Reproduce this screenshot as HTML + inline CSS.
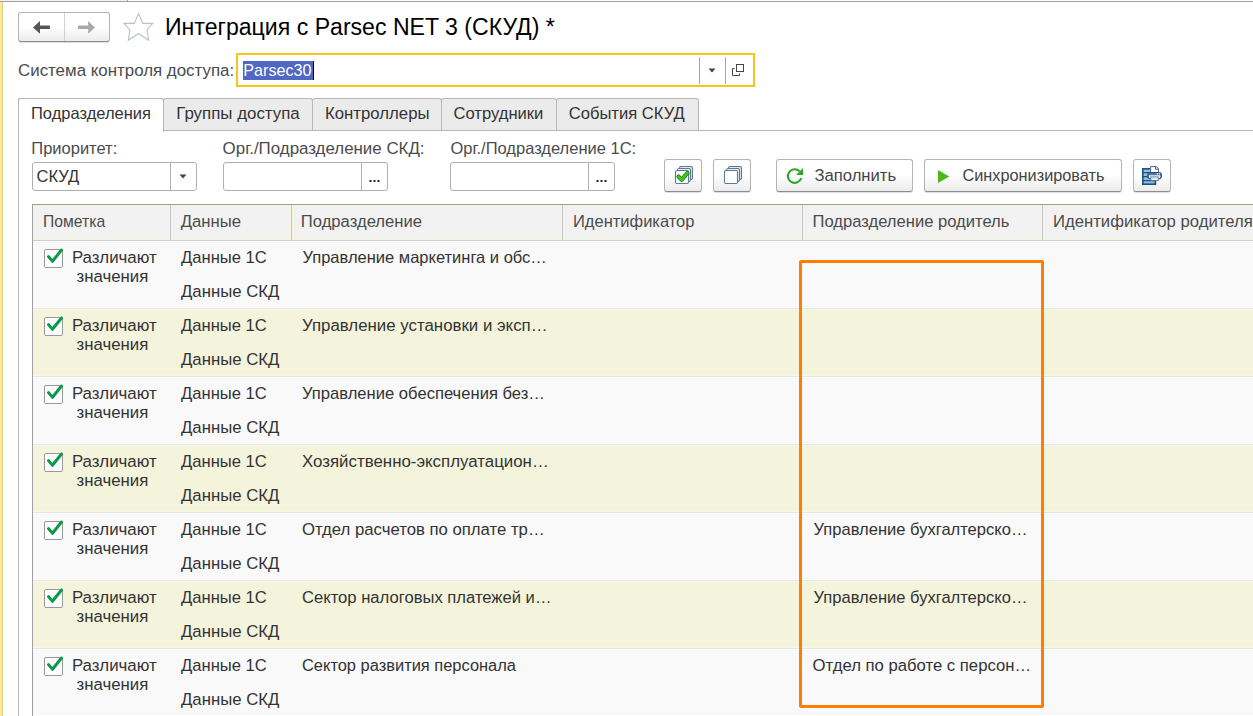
<!DOCTYPE html>
<html><head><meta charset="utf-8">
<style>
*{box-sizing:border-box;margin:0;padding:0}
html,body{width:1253px;height:716px;overflow:hidden;background:#fff}
body{position:relative;font-family:"Liberation Sans",sans-serif;color:#333;font-size:16.5px}
.a{position:absolute}
.t{position:absolute;white-space:nowrap;line-height:20px;height:20px}
.btn{position:absolute;border:1px solid #b4b4b4;border-bottom-color:#8c8c8c;border-radius:3px;background:linear-gradient(#fff 0%,#fff 48%,#ececec 100%);box-shadow:0 1px 0 rgba(0,0,0,.12)}
.fld{position:absolute;border:1px solid #b0b0b0;border-radius:3px;background:#fff}
.tab{position:absolute;top:98px;height:33px;border:1px solid #b7b7b7;border-bottom:none;border-radius:3px 3px 0 0;background:#ebebeb}
.cb{position:absolute;width:19px;height:19px;border:1px solid #9a9a9a;border-radius:2px;background:#fff}
</style></head><body>
<div class="a" style="left:0;top:0;width:127px;height:1px;background:#f2f2f2"></div>
<div class="a" style="left:127px;top:0;width:1px;height:1px;background:#a0a0a0"></div>
<div class="a" style="left:0;top:1px;width:1253px;height:1px;background:#9f9f9f"></div>
<div class="a" style="left:0;top:2px;width:2px;height:714px;background:#fde98f"></div>
<div class="a" style="left:2px;top:2px;width:1px;height:714px;background:#e0cf88"></div>
<div class="btn" style="left:18px;top:12px;width:92px;height:30px"></div>
<div class="a" style="left:64px;top:13px;width:1px;height:28px;background:#d2d2d2"></div>
<svg class="a" style="left:30px;top:18px" width="26" height="20" viewBox="0 0 26 20">
<path d="M3 9.45 L10 3.1 L10 7.5 L19.9 7.5 L19.9 11 L10 11 L10 15.8 Z" fill="#555"/></svg>
<svg class="a" style="left:75px;top:18px" width="26" height="20" viewBox="0 0 26 20">
<path d="M19.9 9.45 L13.2 3.1 L13.2 7.5 L3 7.5 L3 11 L13.2 11 L13.2 15.8 Z" fill="#a9a9a9"/></svg>
<svg class="a" style="left:120px;top:10px" width="38" height="34" viewBox="0 0 38 34">
<path d="M18.5 3.6 L22.9 13.4 L32.7 13.4 L27.1 19.9 L28.7 30.3 L18.5 23.5 L8.3 30.3 L9.9 19.9 L3.9 13.4 L14.3 13.4 Z" fill="none" stroke="#b8c2cb" stroke-width="1.1" stroke-linejoin="miter"/></svg>
<div class="t" style="left:165px;top:15px;font-size:23.1px;color:#000;line-height:24px;height:24px">Интеграция с Parsec NET 3 (СКУД) *</div>
<div class="t" style="left:18px;top:61.00px;font-size:16.9px;color:#4b4b4b;">Система контроля доступа:</div>
<div class="a" style="left:236px;top:53px;width:519px;height:34px;border:2px solid #f8c51c;background:#fff"></div>
<div class="a" style="left:243px;top:61px;width:70px;height:19px;background:#5067c4"></div>
<div class="a" style="left:313px;top:61px;width:1px;height:19px;background:#000"></div>
<div class="t" style="left:243.2px;top:60.00px;font-size:16.2px;color:#fff;">Parsec30</div>
<div class="a" style="left:699px;top:57px;width:1px;height:27px;background:#a6a6a6"></div>
<div class="a" style="left:725px;top:57px;width:1px;height:27px;background:#a6a6a6"></div>
<svg class="a" style="left:706px;top:66px" width="12" height="8"><path d="M2.5 2.5 L9.5 2.5 L6 6.5 Z" fill="#444"/></svg>
<svg class="a" style="left:728px;top:60px" width="20" height="20" viewBox="0 0 20 20">
<rect x="8.5" y="4.5" width="7" height="7" fill="none" stroke="#444" stroke-width="1"/>
<path d="M6.5 8.5 L4.5 8.5 L4.5 15.5 L11.5 15.5 L11.5 13.5" fill="none" stroke="#444" stroke-width="1"/></svg>
<div class="a" style="left:18px;top:98px;width:1px;height:618px;background:#b7b7b7"></div>
<div class="tab" style="left:18px;width:146px;height:34px;background:#fff"></div>
<div class="tab" style="left:163px;width:150px;height:32px"></div>
<div class="tab" style="left:312px;width:130px;height:32px"></div>
<div class="tab" style="left:441px;width:116px;height:32px"></div>
<div class="tab" style="left:556px;width:143px;height:32px"></div>
<div class="t" style="left:31.0px;top:103.00px;font-size:16.5px;color:#333;">Подразделения</div>
<div class="t" style="left:176.2px;top:104.00px;font-size:16.9px;color:#333;">Группы доступа</div>
<div class="t" style="left:325px;top:104.00px;font-size:16.78px;color:#333;">Контроллеры</div>
<div class="t" style="left:453.5px;top:104.00px;font-size:16.6px;color:#333;">Сотрудники</div>
<div class="t" style="left:568.7px;top:104.00px;font-size:16.6px;color:#333;">События СКУД</div>
<div class="a" style="left:18px;top:130px;width:1235px;height:1px;background:#b7b7b7"></div>
<div class="a" style="left:19px;top:130px;width:144px;height:1px;background:#fff"></div>
<div class="t" style="left:31.3px;top:138.00px;font-size:16.5px;color:#4b4b4b;">Приоритет:</div>
<div class="t" style="left:222.6px;top:139.00px;font-size:16.9px;color:#4b4b4b;">Орг./Подразделение СКД:</div>
<div class="t" style="left:450.5px;top:138.00px;font-size:16.5px;color:#4b4b4b;">Орг./Подразделение 1С:</div>
<div class="fld" style="left:32px;top:162px;width:165px;height:29px"></div>
<div class="a" style="left:170px;top:163px;width:1px;height:27px;background:#b0b0b0"></div>
<div class="t" style="left:36.5px;top:166.00px;font-size:16.5px;color:#333;">СКУД</div>
<svg class="a" style="left:177px;top:172px" width="12" height="8"><path d="M2.5 2.5 L9.5 2.5 L6 6.5 Z" fill="#444"/></svg>
<div class="fld" style="left:223px;top:162px;width:165px;height:29px"></div>
<div class="a" style="left:361px;top:163px;width:1px;height:27px;background:#b0b0b0"></div>
<div class="fld" style="left:450px;top:162px;width:165px;height:29px"></div>
<div class="a" style="left:588px;top:163px;width:1px;height:27px;background:#b0b0b0"></div>
<svg class="a" style="left:369px;top:179px" width="12" height="5"><rect x="0.5" y="1" width="2" height="2" fill="#222"/><rect x="4.5" y="1" width="2" height="2" fill="#222"/><rect x="8.5" y="1" width="2" height="2" fill="#222"/></svg>
<svg class="a" style="left:596px;top:179px" width="12" height="5"><rect x="0.5" y="1" width="2" height="2" fill="#222"/><rect x="4.5" y="1" width="2" height="2" fill="#222"/><rect x="8.5" y="1" width="2" height="2" fill="#222"/></svg>
<div class="btn" style="left:664px;top:159px;width:38px;height:33px"></div>
<div class="btn" style="left:713px;top:159px;width:38px;height:33px"></div>
<div class="btn" style="left:776px;top:159px;width:137px;height:33px"></div>
<div class="btn" style="left:924px;top:159px;width:198px;height:33px"></div>
<div class="btn" style="left:1133px;top:159px;width:38px;height:33px"></div>
<div class="t" style="left:814.4px;top:166.00px;font-size:16.66px;color:#444;">Заполнить</div>
<div class="t" style="left:962.5px;top:165.00px;font-size:16.3px;color:#444;">Синхронизировать</div>
<svg class="a" style="left:673px;top:164px" width="22" height="22" viewBox="0 0 22 22"><rect x="6.5" y="2.5" width="13" height="13" rx="1.5" fill="#e3e8ee" stroke="#5d7a94" stroke-width="1.1"/><rect x="4.5" y="4.5" width="13" height="13" rx="1.5" fill="#edf0f4" stroke="#5d7a94" stroke-width="1.1"/><rect x="2.5" y="6.5" width="13" height="13" rx="1.5" fill="#ffffff" stroke="#5d7a94" stroke-width="1.1"/><path d="M5.5 12.6 L8.6 15.8 L14.4 9.0" fill="none" stroke="#1f8a12" stroke-width="4.2" stroke-linecap="round" stroke-linejoin="round"/><path d="M5.5 12.6 L8.6 15.8 L14.4 9.0" fill="none" stroke="#43c823" stroke-width="2.4" stroke-linecap="round" stroke-linejoin="round"/></svg>
<svg class="a" style="left:722px;top:164px" width="22" height="22" viewBox="0 0 22 22"><rect x="6.5" y="2.5" width="13" height="13" rx="1.5" fill="#e3e8ee" stroke="#5d7a94" stroke-width="1.1"/><rect x="4.5" y="4.5" width="13" height="13" rx="1.5" fill="#edf0f4" stroke="#5d7a94" stroke-width="1.1"/><rect x="2.5" y="6.5" width="13" height="13" rx="1.5" fill="#ffffff" stroke="#5d7a94" stroke-width="1.1"/></svg>
<svg class="a" style="left:784px;top:164px" width="22" height="24" viewBox="784 164 22 24"><path d="M801.2 178.0 A6.8 6.8 0 1 1 799.5 171.2" fill="none" stroke="#2ea52e" stroke-width="2.1"/><path d="M803 168 L803 175 L796 175 Z" fill="#2ea52e"/></svg>
<svg class="a" style="left:930px;top:164px" width="30" height="24" viewBox="930 164 30 24"><path d="M938 170 L949.3 176.4 L938 183 Z" fill="#4cb61a"/></svg>
<svg class="a" style="left:1138px;top:162px" width="28" height="26" viewBox="1138 162 28 26">
<rect x="1142.8" y="168.8" width="12.6" height="15.4" fill="#8dbde6" stroke="#1f4f7f" stroke-width="1.6"/>
<path d="M1142.8 172.6 H1155.4 M1142.8 176.6 H1155.4 M1142.8 180.6 H1155.4" stroke="#1f4f7f" stroke-width="1.2"/>
<path d="M1150.6 166.6 H1156.6 L1158.5 168.5 V172.5 H1150.6 Z" fill="#fff" stroke="#5a6b7c" stroke-width="1"/>
<path d="M1155.6 166.8 V169.2 H1158.4" fill="none" stroke="#3a5a7a" stroke-width="1"/>
<rect x="1147.9" y="172.5" width="13.4" height="6.2" rx="1.8" fill="#4f75a0" stroke="#1f4a7a" stroke-width="1"/>
<rect x="1148.9" y="175.2" width="11.4" height="2.8" rx="1" fill="#fff"/>
<rect x="1149.5" y="175.2" width="10.2" height="0.9" fill="#c5d2de"/>
<circle cx="1157.4" cy="173.7" r="0.7" fill="#fff"/><circle cx="1159.4" cy="173.7" r="0.7" fill="#fff"/>
<rect x="1150.8" y="176.9" width="7.4" height="3.6" fill="#fff" stroke="#50708f" stroke-width="0.9"/>
<rect x="1151.4" y="178.3" width="6.2" height="0.8" fill="#bcd0e4"/>
</svg>
<div class="a" style="left:32px;top:204px;width:1221px;height:512px;background:#f9f9f9"></div>
<div class="a" style="left:33px;top:205px;width:1220px;height:35px;background:#f2f2f2"></div>
<div class="a" style="left:32px;top:204px;width:1221px;height:1px;background:#9e9e9e"></div>
<div class="a" style="left:33px;top:240px;width:1220px;height:1px;background:#cdcdcd"></div>
<div class="a" style="left:33px;top:205px;width:137px;height:35px;border:1px solid #f5f5dc"></div>
<div class="a" style="left:171px;top:205px;width:120px;height:35px;border:1px solid #f5f5dc"></div>
<div class="a" style="left:292px;top:205px;width:270px;height:35px;border:1px solid #f5f5dc"></div>
<div class="a" style="left:563px;top:205px;width:239px;height:35px;border:1px solid #f5f5dc"></div>
<div class="a" style="left:803px;top:205px;width:239px;height:35px;border:1px solid #f5f5dc"></div>
<div class="a" style="left:1043px;top:205px;width:258px;height:35px;border:1px solid #f5f5dc"></div>
<div class="a" style="left:170px;top:205px;width:1px;height:35px;background:#c8c8c8"></div>
<div class="a" style="left:291px;top:205px;width:1px;height:35px;background:#c8c8c8"></div>
<div class="a" style="left:562px;top:205px;width:1px;height:35px;background:#c8c8c8"></div>
<div class="a" style="left:802px;top:205px;width:1px;height:35px;background:#c8c8c8"></div>
<div class="a" style="left:1042px;top:205px;width:1px;height:35px;background:#c8c8c8"></div>
<div class="t" style="left:43.0px;top:212.00px;font-size:15.7px;color:#4b4b4b;">Пометка</div>
<div class="t" style="left:180.7px;top:212.00px;font-size:16.7px;color:#4b4b4b;">Данные</div>
<div class="t" style="left:300.8px;top:212.00px;font-size:16.65px;color:#4b4b4b;">Подразделение</div>
<div class="t" style="left:573.0px;top:211.00px;font-size:16.5px;color:#4b4b4b;">Идентификатор</div>
<div class="t" style="left:812.6px;top:212.00px;font-size:16.58px;color:#4b4b4b;">Подразделение родитель</div>
<div class="t" style="left:1053.0px;top:212.00px;font-size:16.7px;color:#4b4b4b;">Идентификатор родителя</div>
<div class="a" style="left:33px;top:241px;width:1220px;height:67px;background:#f9f9f9"></div>
<div class="a" style="left:33px;top:241px;width:1220px;height:1px;background:#fff"></div>
<div class="a" style="left:33px;top:242px;width:1220px;height:1px;background:#f5f5f5"></div>
<div class="a" style="left:33px;top:306px;width:1220px;height:1px;background:#f5f5f5"></div>
<div class="a" style="left:33px;top:307px;width:1220px;height:1px;background:#fff"></div>
<div class="cb" style="left:44px;top:249px"></div>
<svg class="a" style="left:44px;top:246px" width="22" height="22" viewBox="0 0 22 22"><path d="M4.5 10.6 L8.5 15.3 L17.5 4" fill="none" stroke="#0b9a45" stroke-width="3" stroke-linecap="round" stroke-linejoin="round"/></svg>
<div class="t" style="left:71.9px;top:248.00px;font-size:16.86px;">Различают</div>
<div class="t" style="left:76.6px;top:267.00px;font-size:16.8px;">значения</div>
<div class="t" style="left:181px;top:248.00px;font-size:16.6px;">Данные 1С</div>
<div class="t" style="left:181px;top:282.00px;font-size:16.75px;">Данные СКД</div>
<div class="t" style="left:302.5px;top:247.00px;font-size:16.5px;">Управление маркетинга и обс…</div>
<div class="a" style="left:33px;top:309px;width:1220px;height:67px;background:#f4f3dc"></div>
<div class="a" style="left:33px;top:308px;width:1220px;height:1px;background:#e6e6e6"></div>
<div class="a" style="left:33px;top:309px;width:1220px;height:1px;background:#f8f8e2"></div>
<div class="a" style="left:33px;top:375px;width:1220px;height:1px;background:#f8f8e2"></div>
<div class="cb" style="left:44px;top:317px"></div>
<svg class="a" style="left:44px;top:314px" width="22" height="22" viewBox="0 0 22 22"><path d="M4.5 10.6 L8.5 15.3 L17.5 4" fill="none" stroke="#0b9a45" stroke-width="3" stroke-linecap="round" stroke-linejoin="round"/></svg>
<div class="t" style="left:71.9px;top:316.00px;font-size:16.86px;">Различают</div>
<div class="t" style="left:76.6px;top:335.00px;font-size:16.8px;">значения</div>
<div class="t" style="left:181px;top:316.00px;font-size:16.6px;">Данные 1С</div>
<div class="t" style="left:181px;top:350.00px;font-size:16.75px;">Данные СКД</div>
<div class="t" style="left:302.0px;top:316.00px;font-size:16.85px;">Управление установки и эксп…</div>
<div class="a" style="left:33px;top:377px;width:1220px;height:67px;background:#f9f9f9"></div>
<div class="a" style="left:33px;top:376px;width:1220px;height:1px;background:#e6e6e6"></div>
<div class="a" style="left:33px;top:377px;width:1220px;height:1px;background:#fff"></div>
<div class="a" style="left:33px;top:378px;width:1220px;height:1px;background:#f5f5f5"></div>
<div class="a" style="left:33px;top:442px;width:1220px;height:1px;background:#f5f5f5"></div>
<div class="a" style="left:33px;top:443px;width:1220px;height:1px;background:#fff"></div>
<div class="cb" style="left:44px;top:385px"></div>
<svg class="a" style="left:44px;top:382px" width="22" height="22" viewBox="0 0 22 22"><path d="M4.5 10.6 L8.5 15.3 L17.5 4" fill="none" stroke="#0b9a45" stroke-width="3" stroke-linecap="round" stroke-linejoin="round"/></svg>
<div class="t" style="left:71.9px;top:384.00px;font-size:16.86px;">Различают</div>
<div class="t" style="left:76.6px;top:403.00px;font-size:16.8px;">значения</div>
<div class="t" style="left:181px;top:384.00px;font-size:16.6px;">Данные 1С</div>
<div class="t" style="left:181px;top:418.00px;font-size:16.75px;">Данные СКД</div>
<div class="t" style="left:302.0px;top:384.00px;font-size:16.6px;">Управление обеспечения без…</div>
<div class="a" style="left:33px;top:445px;width:1220px;height:67px;background:#f4f3dc"></div>
<div class="a" style="left:33px;top:444px;width:1220px;height:1px;background:#e6e6e6"></div>
<div class="a" style="left:33px;top:445px;width:1220px;height:1px;background:#f8f8e2"></div>
<div class="a" style="left:33px;top:511px;width:1220px;height:1px;background:#f8f8e2"></div>
<div class="cb" style="left:44px;top:453px"></div>
<svg class="a" style="left:44px;top:450px" width="22" height="22" viewBox="0 0 22 22"><path d="M4.5 10.6 L8.5 15.3 L17.5 4" fill="none" stroke="#0b9a45" stroke-width="3" stroke-linecap="round" stroke-linejoin="round"/></svg>
<div class="t" style="left:71.9px;top:452.00px;font-size:16.86px;">Различают</div>
<div class="t" style="left:76.6px;top:471.00px;font-size:16.8px;">значения</div>
<div class="t" style="left:181px;top:452.00px;font-size:16.6px;">Данные 1С</div>
<div class="t" style="left:181px;top:486.00px;font-size:16.75px;">Данные СКД</div>
<div class="t" style="left:302.0px;top:452.00px;font-size:16.86px;">Хозяйственно-эксплуатацион…</div>
<div class="a" style="left:33px;top:513px;width:1220px;height:67px;background:#f9f9f9"></div>
<div class="a" style="left:33px;top:512px;width:1220px;height:1px;background:#e6e6e6"></div>
<div class="a" style="left:33px;top:513px;width:1220px;height:1px;background:#fff"></div>
<div class="a" style="left:33px;top:514px;width:1220px;height:1px;background:#f5f5f5"></div>
<div class="a" style="left:33px;top:578px;width:1220px;height:1px;background:#f5f5f5"></div>
<div class="a" style="left:33px;top:579px;width:1220px;height:1px;background:#fff"></div>
<div class="cb" style="left:44px;top:521px"></div>
<svg class="a" style="left:44px;top:518px" width="22" height="22" viewBox="0 0 22 22"><path d="M4.5 10.6 L8.5 15.3 L17.5 4" fill="none" stroke="#0b9a45" stroke-width="3" stroke-linecap="round" stroke-linejoin="round"/></svg>
<div class="t" style="left:71.9px;top:520.00px;font-size:16.86px;">Различают</div>
<div class="t" style="left:76.6px;top:539.00px;font-size:16.8px;">значения</div>
<div class="t" style="left:181px;top:520.00px;font-size:16.6px;">Данные 1С</div>
<div class="t" style="left:181px;top:554.00px;font-size:16.75px;">Данные СКД</div>
<div class="t" style="left:302.0px;top:520.00px;font-size:16.73px;">Отдел расчетов по оплате тр…</div>
<div class="t" style="left:813.6px;top:520.00px;font-size:16.55px;">Управление бухгалтерско…</div>
<div class="a" style="left:33px;top:581px;width:1220px;height:67px;background:#f4f3dc"></div>
<div class="a" style="left:33px;top:580px;width:1220px;height:1px;background:#e6e6e6"></div>
<div class="a" style="left:33px;top:581px;width:1220px;height:1px;background:#f8f8e2"></div>
<div class="a" style="left:33px;top:647px;width:1220px;height:1px;background:#f8f8e2"></div>
<div class="cb" style="left:44px;top:589px"></div>
<svg class="a" style="left:44px;top:586px" width="22" height="22" viewBox="0 0 22 22"><path d="M4.5 10.6 L8.5 15.3 L17.5 4" fill="none" stroke="#0b9a45" stroke-width="3" stroke-linecap="round" stroke-linejoin="round"/></svg>
<div class="t" style="left:71.9px;top:588.00px;font-size:16.86px;">Различают</div>
<div class="t" style="left:76.6px;top:607.00px;font-size:16.8px;">значения</div>
<div class="t" style="left:181px;top:588.00px;font-size:16.6px;">Данные 1С</div>
<div class="t" style="left:181px;top:622.00px;font-size:16.75px;">Данные СКД</div>
<div class="t" style="left:302.0px;top:588.00px;font-size:16.62px;">Сектор налоговых платежей и…</div>
<div class="t" style="left:813.6px;top:588.00px;font-size:16.55px;">Управление бухгалтерско…</div>
<div class="a" style="left:33px;top:649px;width:1220px;height:67px;background:#f9f9f9"></div>
<div class="a" style="left:33px;top:648px;width:1220px;height:1px;background:#e6e6e6"></div>
<div class="a" style="left:33px;top:649px;width:1220px;height:1px;background:#fff"></div>
<div class="a" style="left:33px;top:650px;width:1220px;height:1px;background:#f5f5f5"></div>
<div class="a" style="left:33px;top:714px;width:1220px;height:1px;background:#f5f5f5"></div>
<div class="a" style="left:33px;top:715px;width:1220px;height:1px;background:#fff"></div>
<div class="cb" style="left:44px;top:657px"></div>
<svg class="a" style="left:44px;top:654px" width="22" height="22" viewBox="0 0 22 22"><path d="M4.5 10.6 L8.5 15.3 L17.5 4" fill="none" stroke="#0b9a45" stroke-width="3" stroke-linecap="round" stroke-linejoin="round"/></svg>
<div class="t" style="left:71.9px;top:656.00px;font-size:16.86px;">Различают</div>
<div class="t" style="left:76.6px;top:675.00px;font-size:16.8px;">значения</div>
<div class="t" style="left:181px;top:656.00px;font-size:16.6px;">Данные 1С</div>
<div class="t" style="left:181px;top:690.00px;font-size:16.75px;">Данные СКД</div>
<div class="t" style="left:302.0px;top:655.00px;font-size:16.46px;">Сектор развития персонала</div>
<div class="t" style="left:812.6px;top:656.00px;font-size:16.7px;">Отдел по работе с персон…</div>
<div class="a" style="left:32px;top:204px;width:1px;height:512px;background:#a0a0a0"></div>
<div class="a" style="left:799px;top:260px;width:245px;height:448px;border:3px solid #ff7d00;border-radius:2px"></div>
</body></html>
